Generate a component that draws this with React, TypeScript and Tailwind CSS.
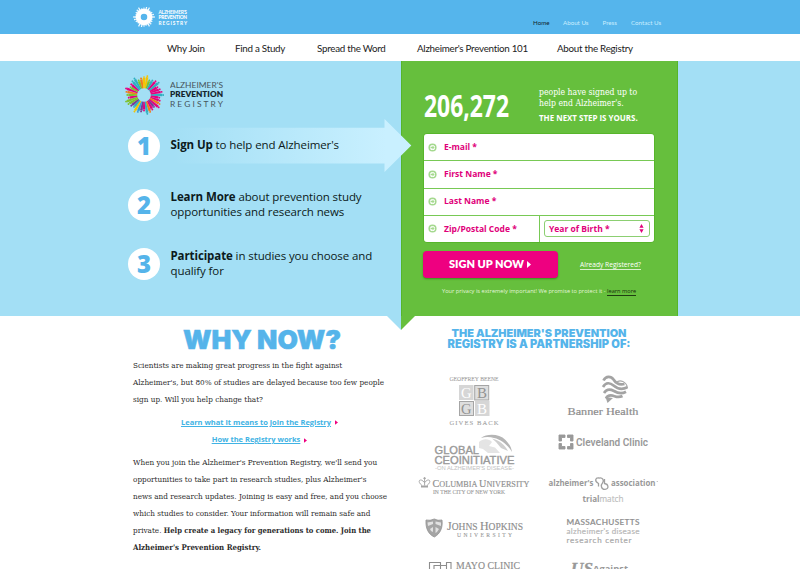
import type { ReactNode } from "react";

const SANS = "font-['Open_Sans',sans-serif] [font-stretch:normal]";
const SERIF = "font-['DejaVu_Serif_Condensed','DejaVu_Serif',serif] [font-stretch:condensed]";

const PINK = "#e6007e";
const ORANGE = "#f07d1a";
const YELLOW = "#f5c400";
const GREEN = "#7fc02c";
const TEAL = "#2fb0bf";
const BLUE = "#3a9bd6";
const PURPLE = "#7a3b96";

// Clockwise from three o'clock.
const RAY_COLORS = [
  TEAL, PINK, PINK, ORANGE, PINK, PURPLE, PINK, ORANGE, TEAL, PINK, PURPLE, BLUE,
  YELLOW, TEAL, PURPLE, GREEN, GREEN, PINK, GREEN, ORANGE, PINK, GREEN, PINK, TEAL,
  TEAL, GREEN, ORANGE, YELLOW, YELLOW, GREEN, TEAL, PINK, TEAL, PINK, PINK, PINK,
];

function Burst({ count, inner, outer, white, className }: { count: number; inner: number; outer: number; white?: boolean; className: string }) {
  return (
    <svg viewBox="-20 -20 40 40" className={className}>
      {white && <circle r="10.5" fill="none" stroke="#fff" strokeWidth="9" />}
      {Array.from({ length: count }, (_, i) => {
        const angle = (i / count) * 360;
        const len = outer - ((i * 3) % 4) * 1.2;
        const color = white ? "#fff" : RAY_COLORS[i % RAY_COLORS.length];
        return (
          <g key={i} transform={`rotate(${angle})`} fill={color}>
            <path d={`M${inner} -0.7L${len - 1.9} -1.3V1.3L${inner} 0.7Z`} />
            <circle cx={len - 0.9} cy="0" r={white ? 1.3 : 0.95} />
          </g>
        );
      })}
    </svg>
  );
}

function Step({ n, children }: { n: number; children: ReactNode }) {
  return (
    <li className="relative flex h-[59px] items-center pl-[128px]">
      {n === 1 && (
        <svg viewBox="160 119 252 54" className="absolute left-[160px] top-[3px] z-10 h-[54px] w-[252px]">
          <defs>
            <linearGradient id="arrow" x1="0" x2="1">
              <stop offset="0.05" stopColor="#c9f0ff" stopOpacity="0" />
              <stop offset="0.9" stopColor="#c9f0ff" />
            </linearGradient>
          </defs>
          <path d="M160 127.7H384.5V119L411.3 145.5L384.5 172V163.5H160Z" fill="url(#arrow)" />
        </svg>
      )}
      <span className="flex size-8 items-center justify-center rounded-full bg-white pt-px font-['Open_Sans',sans-serif] text-[24px] font-extrabold text-[#55b4ea]">{n}</span>
      <p className={`${SANS} z-20 ml-[10.5px] whitespace-nowrap pb-px text-[11.5px] leading-[15.5px] tracking-[-0.1px] text-[#0c1a20]`}>{children}</p>
    </li>
  );
}

function FieldIcon() {
  return (
    <svg viewBox="0 0 10 10" className="size-[9px] shrink-0">
      <circle cx="5" cy="5" r="3.7" fill="white" stroke="#a5d98f" strokeWidth="1.7" />
      <path d="M2.8 4.2H5V2.8L7.4 5L5 7.2V5.8H2.8Z" fill="#a5d98f" />
    </svg>
  );
}

function Field({ label }: { label: string }) {
  return (
    <label className="flex flex-1 items-center gap-[7px] whitespace-nowrap bg-white pl-1">
      <FieldIcon />
      <span>{label}</span>
    </label>
  );
}

function RightTick() {
  return (
    <svg viewBox="0 0 4 6" className="ml-1 inline-block h-[5px] w-[3px]">
      <path d="M0 0L4 3L0 6Z" fill="#ee0080" />
    </svg>
  );
}

function LeftLogos() {
  return (
    <svg viewBox="410 365 130 204" className="h-[204px] w-[130px]" fontFamily="Liberation Serif, serif" fill="#a3a3a3">
      <text x="449.5" y="381" fontSize="6.6" stroke="#a3a3a3" strokeWidth="0.1" textLength="49" lengthAdjust="spacingAndGlyphs">GEOFFREY BEENE</text>
      <rect x="459" y="385" width="14.5" height="15" fill="#d6d6d6" />
      <rect x="474.7" y="385.5" width="14" height="14.5" fill="#dedede" stroke="#a5a5a5" />
      <rect x="459.5" y="401.5" width="14" height="14" fill="#dedede" stroke="#a5a5a5" />
      <rect x="475" y="401" width="14.5" height="15" fill="#d6d6d6" />
      <text x="461" y="397.7" fontSize="15" fill="#fff" textLength="10.5" lengthAdjust="spacingAndGlyphs">G</text>
      <text x="477" y="397.7" fontSize="15" fill="#929292">B</text>
      <text x="461" y="413.6" fontSize="15" fill="#929292" textLength="10.5" lengthAdjust="spacingAndGlyphs">G</text>
      <text x="477" y="413.6" fontSize="15" fill="#fff">B</text>
      <text x="449.5" y="425" fontSize="6.6" stroke="#a3a3a3" strokeWidth="0.1" textLength="49">GIVES BACK</text>

      <path d="M481 438C487 433.5 499 433.500 505.500 440C509.500 444 511.500 448 512 452C507 444 501 439.500 494 438C490 436.500 485 436.500 481 438Z" fill="#b5b5b5" />
      <path d="M479 442C483 438 489 438.500 492 442L489 446L495 447.500L500 453H488L483 449L479 448Z" fill="#e4e4e4" />
      <path d="M492 438.500C499 440 505 445 508 451L501 448L496 442Z" fill="#cfcfcf" />
      <g fontFamily="Liberation Sans, sans-serif">
        <text x="434.5" y="454" fontSize="10.2" fill="#999" stroke="#999" strokeWidth="0.35" textLength="44.5" lengthAdjust="spacingAndGlyphs">GLOBAL</text>
        <text x="434.5" y="463.6" fontSize="10.2" fill="#999" stroke="#999" strokeWidth="0.35" textLength="80" lengthAdjust="spacingAndGlyphs">CEOINITIATIVE</text>
        <text x="435" y="469.6" fontSize="4.6" fill="#c2c2c2" textLength="79" lengthAdjust="spacingAndGlyphs">-ON ALZHEIMER'S DISEASE-</text>
      </g>

      <path d="M421 485.500H428V487.500H421Z" />
      <path d="M422 485.500C417.500 482 419 479 422 480.300L424.600 482.500L427 480.300C430 479 431.500 482 427 485.500M424.600 477V485.500M423.200 478.300H426" fill="none" stroke="#a0a0a0" strokeWidth="0.9" />
      <text x="432.5" y="486.5" fontSize="10" fill="#8f8f8f" stroke="#8f8f8f" strokeWidth="0.15" textLength="97" lengthAdjust="spacingAndGlyphs">C<tspan fontSize="8">OLUMBIA </tspan>U<tspan fontSize="8">NIVERSITY</tspan></text>
      <text x="433" y="493.8" fontSize="5.3" fill="#999" stroke="#999" strokeWidth="0.1" textLength="72" lengthAdjust="spacingAndGlyphs">IN THE CITY OF NEW YORK</text>

      <path d="M426 520Q430 521 434.3 519Q438 521 442 520C443 528 440 534 434.3 537C428 534 425.500 528 426 520Z" fill="#a5a5a5" stroke="#929292" strokeWidth="0.8" />
      <path d="M427.500 522.500L433 521.500V524L428 526ZM435.500 521.500L441 522.500V526L435.500 524ZM430 529L433 527V532L431 531ZM435.500 527L439 529L437 532L435.500 533Z" fill="#e2e2e2" />
      <text x="447" y="529.6" fontSize="12.500" fill="#8d8d8d" stroke="#8d8d8d" strokeWidth="0.15" textLength="76" lengthAdjust="spacingAndGlyphs">J<tspan fontSize="10">OHNS </tspan>H<tspan fontSize="10">OPKINS</tspan></text>
      <text x="457" y="536.7" fontSize="5.6" fill="#999" stroke="#999" strokeWidth="0.1" textLength="55">UNIVERSITY</text>

      <path d="M429.500 575V562.500H440.500V575M434 575V565.500H446.500V562.500H451V575M446.500 565.500V575M440.500 565.500V575" fill="none" stroke="#8d8d8d" strokeWidth="1.1" />
      <text x="456" y="568.5" fontSize="10.6" fill="#8d8d8d" stroke="#8d8d8d" strokeWidth="0.15" textLength="64" lengthAdjust="spacingAndGlyphs">MAYO CLINIC</text>
    </svg>
  );
}

function RightLogos() {
  return (
    <svg viewBox="540 365 130 204" className="h-[204px] w-[130px]" fontFamily="Open Sans, sans-serif" fill="#999">
      <g fill="none" stroke="#a3a3a3" strokeWidth="2.7">
        <path d="M603.500 380.500C606 375.500 611 376 613.500 379.500C616 383.500 620 385 624.500 384" />
        <path d="M603 387C606 382 610 382.500 613.500 385.500C617 388.500 622 390 627.300 387.300" />
        <path d="M604 393C607 388.500 610 389 614 391C618 393.500 622 394 626 391.800" />
        <path d="M606 398.500C608 394.500 611 395 614.500 396.200C618 397.500 620 397.300 622.500 396" />
      </g>
      <path d="M616 382.500C620 379 626.500 381.500 627.500 388" fill="none" stroke="#a8a8a8" strokeWidth="1.1" />
      <path d="M605.500 397L607.500 403L613 398Z" fill="#a3a3a3" />
      <text x="567.500" y="414.800" fontSize="11.200" fontFamily="Liberation Serif, serif" fill="#8d8d8d" stroke="#8d8d8d" strokeWidth="0.2" textLength="71" lengthAdjust="spacingAndGlyphs">Banner Health</text>

      <path d="M559 435H565V437.500H561.500V441H559ZM567.500 435H573V441H570.500V437.500H567.500ZM559 443.500H561.500V446.500H565V449H559ZM570.500 443.500H573V449H567.500V446.500H570.500Z" fill="#999" stroke="#999" strokeWidth="0.9" />
      <text x="576" y="445.800" fontSize="10.500" fontWeight="600" fontFamily="Roboto, sans-serif" textLength="72" lengthAdjust="spacingAndGlyphs">Cleveland Clinic</text>

      <text x="548.500" y="486" fontSize="9.200" fontWeight="700" textLength="45" lengthAdjust="spacingAndGlyphs">alzheimer's</text>
      <path d="M598.500 486.500V483.500C594 481 595.500 477.500 599 478C602.500 477 604.500 480.500 602.500 483C600.500 485 601 489.500 605 489.300C609.500 489 608.500 484 604.500 483.500V479" fill="none" stroke="#a0a0a0" strokeWidth="1.300" />
      <text x="611" y="486" fontSize="9.200" fontWeight="700" textLength="44.500" lengthAdjust="spacingAndGlyphs">association</text>
      <circle cx="657.200" cy="481.500" r="0.500" />
      <text x="582.500" y="501.800" fontSize="8.500" fontWeight="700" textLength="17" lengthAdjust="spacingAndGlyphs">trial</text>
      <text x="599.500" y="501.800" fontSize="8.500" fill="#bcbcbc" stroke="#bcbcbc" strokeWidth="0.15" textLength="24" lengthAdjust="spacingAndGlyphs">match</text>

      <g fontFamily="Lato, sans-serif">
        <text x="566.500" y="524.700" fontSize="8.200" fontWeight="600" fill="#8f8f8f" stroke="#8f8f8f" strokeWidth="0.15" textLength="73">MASSACHUSETTS</text>
        <text x="566.500" y="534.200" fontSize="8" fill="#b8b8b8" stroke="#b8b8b8" strokeWidth="0.2" textLength="73">alzheimer's disease</text>
        <text x="566.500" y="543.200" fontSize="8" fill="#aaa" stroke="#aaa" strokeWidth="0.2" textLength="65">research center</text>
      </g>

      <text x="571" y="573.500" fontSize="16.500" fontWeight="700" fontStyle="italic" fontFamily="Liberation Serif, serif" stroke="#999" strokeWidth="0.3" textLength="22" lengthAdjust="spacingAndGlyphs">US</text>
      <text x="593" y="572" fontSize="9.500" fontWeight="700" textLength="35" lengthAdjust="spacingAndGlyphs">Against</text>
    </svg>
  );
}

export default function App() {
  return (
    <div className="h-[569px] w-[800px] overflow-hidden bg-white">
      <header className="flex h-[34px] items-start bg-[#55b5ec] pl-[133px]">
        <Burst count={24} inner={7} outer={19.5} white className="mt-1.5 size-[22px]" />
        <svg viewBox="0 0 30 17" className="ml-[3px] mt-[9px] h-[17px] w-[30px]" fontFamily="Lato, sans-serif" fill="#fff">
          <text x="0.5" y="4.500" fontSize="4.800" fontWeight="700" textLength="28.5">ALZHEIMER'S</text>
          <text x="0.5" y="10" fontSize="4.800" fontWeight="900" textLength="28.5">PREVENTION</text>
          <text x="0.5" y="15.500" fontSize="4.800" fontWeight="700" textLength="28.5">REGISTRY</text>
        </svg>
        <nav className="ml-[345px] mt-[18px] flex whitespace-nowrap font-['Lato',sans-serif] text-[6.2px] leading-[10px] text-[#c9eeff]">
          <a className="w-[30px] text-[#10242f]">Home</a>
          <a className="w-[39.5px]">About Us</a>
          <a className="w-[28.5px]">Press</a>
          <a>Contact Us</a>
        </nav>
      </header>

      <nav className="flex h-[27px] items-center whitespace-nowrap bg-white pl-[167px] pt-px font-['Lato',sans-serif] text-[9.8px] tracking-[-0.27px] text-[#1c1c1c]">
        <a className="w-[68px]">Why Join</a>
        <a className="w-[82px]">Find a Study</a>
        <a className="w-[100px]">Spread the Word</a>
        <a className="w-[140px]">Alzheimer's Prevention 101</a>
        <a>About the Registry</a>
      </nav>

      <main>
        <section className="relative flex h-[255px] bg-[#a3dff5]">
          <div className="w-[401px]">
            <div className="flex h-[55px] items-start pl-[123.5px]">
              <Burst count={36} inner={6.8} outer={20} className="mt-[13.500px] size-10" />
              <svg viewBox="170 78 54 32" className="ml-[6.5px] mt-[17px] h-8 w-[54px]" fontFamily="Lato, sans-serif" fill="#46545b">
                <text x="170" y="87.700" fontSize="8.400" textLength="53">ALZHEIMER'S</text>
                <text x="170" y="97.300" fontSize="8.200" fontWeight="800" fill="#16262d" textLength="53">PREVENTION</text>
                <text x="170" y="107.300" fontSize="8.400" textLength="53">REGISTRY</text>
              </svg>
            </div>
            <ol>
              <Step n={1}><b>Sign Up</b> to help end Alzheimer's</Step>
              <Step n={2}><b>Learn More</b> about prevention study<br />opportunities and research news</Step>
              <Step n={3}><b>Participate</b> in studies you choose and<br />qualify for</Step>
            </ol>
          </div>

          <form className="w-[277px] border-x border-[#57b52b] bg-[#66bf3d] pl-[21px]">
            <div className="flex h-[72px] pl-px text-white">
              <div className="w-[115px] whitespace-nowrap pt-[25px] font-['Open_Sans',sans-serif] text-[29.500px] font-bold leading-[40px]">
                <span className="inline-block origin-left scale-x-[0.775]">206,272</span>
              </div>
              <div className="whitespace-nowrap pt-[26px]">
                <p className={`${SERIF} text-[8.600px] leading-[10.700px]`}>people have signed up to<br />help end Alzheimer's.</p>
                <p className={`${SANS} mt-[4px] text-[7.950px] font-bold leading-[12px]`}>THE NEXT STEP IS YOURS.</p>
              </div>
            </div>
            <div className={`${SANS} flex h-[110px] w-[232px] flex-col gap-px overflow-hidden rounded-[4px] border border-[#57b52b] bg-[#78c955] text-[8.500px] font-bold text-[#e0007a]`}>
              <Field label="E-mail *" />
              <Field label="First Name *" />
              <Field label="Last Name *" />
              <div className="flex flex-1 gap-px">
                <Field label="Zip/Postal Code *" />
                <div className="flex w-[114px] items-center bg-white pl-1">
                  <div className="flex h-[17px] w-[106px] items-center justify-between whitespace-nowrap rounded-[3px] border border-[#8ccf72] pl-1 pr-[5px]">
                    Year of Birth *
                    <svg viewBox="0 0 5 9" className="h-[9px] w-[5px]">
                      <path d="M2.500 0L4.600 3.700H0.400ZM2.500 9L4.600 5.300H0.400Z" fill="#e0007a" />
                    </svg>
                  </div>
                </div>
              </div>
            </div>
            <div className="mt-[8px] flex items-center">
              <button type="button" className="flex h-[27px] w-[135px] items-center justify-center whitespace-nowrap rounded-[4px] bg-[#ee0080] pr-px font-['Lato',sans-serif] text-[11px] font-extrabold text-white shadow-[0_1px_2px_#3f8a20]">
                SIGN UP NOW
                <svg viewBox="0 0 4 7" className="ml-[3px] h-[7px] w-1"><path d="M0 0L4 3.500L0 7Z" fill="#fff" /></svg>
              </button>
              <a className={`${SANS} ml-[22px] whitespace-nowrap border-b border-[#d8f0cc] text-[6.650px] leading-[9px] text-white`}>Already Registered?</a>
            </div>
            <p className={`${SANS} ml-[19px] mt-[9px] whitespace-nowrap text-[5.650px] leading-[9px] text-[#e4f5dc]`}>
              Your privacy is extremely important! We promise to protect it - <a className="inline-block border-b border-[#1f3d12] leading-[8px] text-[#17300c]">learn more</a>
            </p>
          </form>
          <svg viewBox="0 0 28 14" className="absolute left-[387px] top-[255px] h-3.5 w-7">
            <path d="M0 0H14V14Z" fill="#a3dff5" />
            <path d="M14 0H28L14 14Z" fill="#66bf3d" />
          </svg>
        </section>

        <section className="flex">
          <div className="w-[410px] pl-[133px]">
            <h1 className="ml-[50px] mt-[5px] whitespace-nowrap font-['Inter',sans-serif] text-[26.400px] font-black leading-[36px] text-[#55b4ea] [-webkit-text-stroke:0.5px_#55b4ea]">WHY NOW?</h1>
            <div className={`${SERIF} whitespace-nowrap text-[8.100px] leading-[16.900px] text-[#2c2c2c]`}>
              <p>
                Scientists are making great progress in the fight against<br />
                Alzheimer's, but 80% of studies are delayed because too few people<br />
                sign up. Will you help change that?
              </p>
              <div className={`${SANS} mb-[5.500px] mt-[6px] w-[253px] text-center text-[7.500px] font-bold leading-[17.500px] text-[#41b3e4]`}>
                <div><a className="underline">Learn what it means to join the Registry</a><RightTick /></div>
                <div><a className="underline">How the Registry works</a><RightTick /></div>
              </div>
              <p>
                When you join the Alzheimer's Prevention Registry, we'll send you<br />
                opportunities to take part in research studies, plus Alzheimer's<br />
                news and research updates. Joining is easy and free, and you choose<br />
                which studies to consider. Your information will remain safe and<br />
                private. <b className="text-[7.600px] leading-none">Help create a legacy for generations to come. Join the</b><br />
                <b className="text-[7.800px] leading-none">Alzheimer's Prevention Registry.</b>
              </p>
            </div>
          </div>
          <div className="w-[260px]">
            <h2 className="mt-[12px] h-[37px] w-[258px] whitespace-nowrap text-center font-['Inter',sans-serif] text-[10.900px] font-black leading-[11px] text-[#55b4ea]">
              THE ALZHEIMER'S PREVENTION<br /><span className="text-[11.100px]">REGISTRY IS A PARTNERSHIP OF:</span>
            </h2>
            <div className="flex">
              <LeftLogos />
              <RightLogos />
            </div>
          </div>
        </section>
      </main>
    </div>
  );
}
